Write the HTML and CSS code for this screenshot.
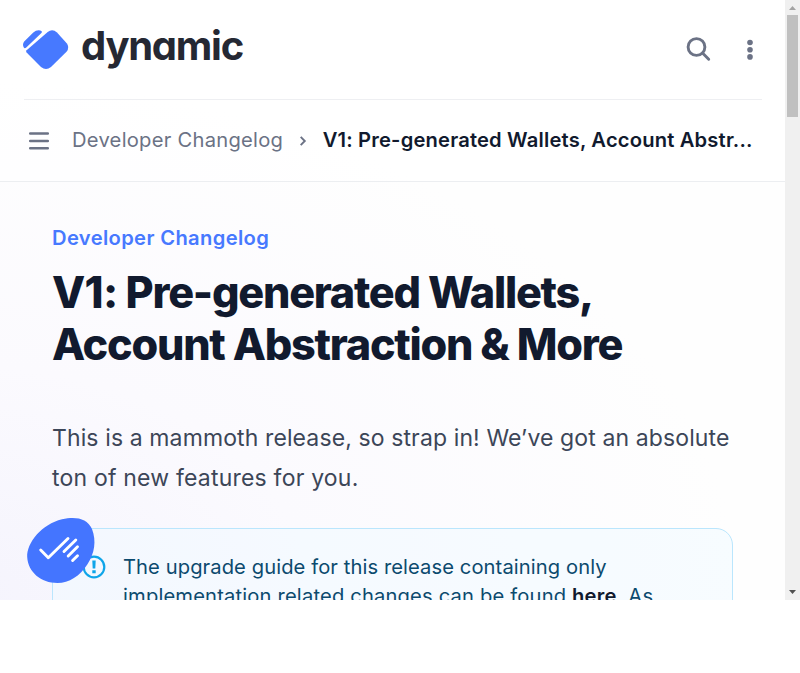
FILE: index.html
```html
<!DOCTYPE html>
<html lang="en">
<head>
<meta charset="utf-8">
<title>V1: Pre-generated Wallets, Account Abstraction &amp; More</title>
<link rel="stylesheet" href="styles.css">
</head>
<body>
<div class="window">
  <div class="page">
    <header class="header">
      <div class="topbar">
        <a class="logo">
          <svg width="46" height="40" viewBox="0 0 46 40" fill="#4779ff"><path d="M.8 17.600C-.3 15.800-.3 13.300 1.200 11.600L10.300 2.600Q13.500-.5 17.300.4L18.600 1.200Q19.500 2 18.400 3L3.300 17.400Q1.800 18.900.8 17.600Z"/><path d="M3.600 22.500Q2.500 21.300 3.600 20.300L24.700 2Q29.500-1.700 34 2.600L43.700 13.300Q47 17.400 43.500 21.700L28 36.900Q23 41.100 18 36.900Z"/></svg>
          <span class="wordmark">dynamic</span>
        </a>
        <div class="actions">
          <svg width="25" height="25" viewBox="0 0 25 25" fill="none" stroke="#6b7285" stroke-width="2.900" stroke-linecap="round"><circle cx="10.500" cy="10" r="8.400"/><path d="M16.500 16L22.700 22.200"/></svg>
          <svg width="6" height="20" viewBox="0 0 6 20" fill="#6b7285"><circle cx="3" cy="2.500" r="2.800"/><circle cx="3" cy="9.700" r="2.800"/><circle cx="3" cy="16.900" r="2.800"/></svg>
        </div>
      </div>
      <nav class="crumbs">
        <svg class="menu" width="20" height="18" viewBox="0 0 20 18" stroke="#6b7285" stroke-width="2.500" stroke-linecap="round"><path d="M1.200 1.500H18.800M1.200 9H18.800M1.200 16.300H18.800"/></svg>
        <span class="crumb">Developer Changelog</span>
        <svg class="chevron" width="6" height="10" viewBox="0 0 6 10" fill="none" stroke="#6b7285" stroke-width="1.900"><path d="M.7.8L4.800 5L.7 9.200"/></svg>
        <span class="current">V1: Pre-generated Wallets, Account Abstr...</span>
      </nav>
    </header>
    <main class="content">
      <p class="eyebrow">Developer Changelog</p>
      <h1 class="title"><span class="version">V1:</span> Pre-generated Wallets,<br>Account Abstraction &amp; More</h1>
      <p class="lead">This is a mammoth release, so strap in! We’ve got an absolute<br><span class="wide">ton of new features for you.</span></p>
      <aside class="callout">
        <svg class="info" width="24" height="24" viewBox="0 0 24 24"><circle cx="12" cy="12" r="10.300" fill="none" stroke="#0ea5e9" stroke-width="2.200"/><path fill="#0ea5e9" d="M10.300 5.500H13.700L13.300 13.500H10.700ZM10.300 15.300H13.700V18.300H10.300Z"/></svg>
        <p class="note">The upgrade guide for this release containing only<br><span class="wide">implementation related changes can be found <b>here</b>. As</span></p>
      </aside>
    </main>
    <svg class="consent" width="68" height="66" viewBox="0 0 68 66"><path fill="#4475ff" d="M.2 39C-.5 25 15 6 35 1.300C49-1.600 60 .3 65 11C69.500 23 67.800 35 60.300 46.500C53 58 42 65 30.500 65C14 65 1 54 .2 39Z"/><path fill="none" stroke="#fff" stroke-width="2.900" stroke-linecap="round" stroke-linejoin="round" d="M13.700 32L21.300 39.700L41 20.500M37 33.500L48.800 22M41.200 38L50.500 28.800M45.600 42.500L50.500 37.700"/></svg>
  </div>
  <div class="scrollbar">
    <svg width="7" height="4" viewBox="0 0 7 4"><path fill="#a3a3a3" d="M0 4L3.500 0L7 4Z"/></svg>
    <div class="thumb"></div>
    <svg class="down" width="7" height="4" viewBox="0 0 7 4"><path fill="#505050" d="M0 0H7L3.500 4Z"/></svg>
  </div>
</div>
</body>
</html>
```
FILE: styles.css
```css
* { box-sizing: border-box; }
body { margin: 0; background: #fff; font-family: Inter, "Liberation Sans", sans-serif; }
h1, p { margin: 0; white-space: nowrap; }
svg { display: block; flex: none; overflow: visible; }
.window { display: flex; height: 600px; overflow: hidden; }
.page {
  position: relative; width: 785px; height: 600px; overflow: hidden;
  background: radial-gradient(ellipse 780px 520px at -40px 600px, #f5f4fd 0%, #fbfafe 45%, #fefefe 100%);
}
.header { height: 182px; border-bottom: 1px solid #eceef1; background: rgba(255,255,255,.65); }
.topbar {
  display: flex; align-items: center; justify-content: space-between;
  height: 100px; margin: 0 23px 0 24px; border-bottom: 1px solid #eeeff2;
}
.logo { display: flex; align-items: center; gap: 12px; margin-left: -1px; }
.wordmark {
  margin-top: -7px; font-size: 40px; line-height: 48px; font-weight: 700; letter-spacing: -1.250px;
  color: #252833; font-feature-settings: "cv11", "ss03";
}
.actions { display: flex; align-items: center; gap: 36px; padding-right: 9px; }
.crumbs { display: flex; align-items: center; height: 81px; padding: 0 29px; font-size: 20.160px; line-height: 29px; white-space: nowrap; }
.crumb { margin: -2px 0 0 23px; color: #6b7285; letter-spacing: .26px; }
.chevron { margin: 0 16.500px 0 17px; }
.current { margin-top: -2px; font-weight: 600; letter-spacing: .18px; color: #111a2e; }
.content { padding: 41px 52px 0; }
.eyebrow { font-size: 20.160px; line-height: 29px; font-weight: 600; letter-spacing: .36px; color: #4779ff; }
.title { margin-top: 14px; font-size: 43.200px; line-height: 52px; font-weight: 800; letter-spacing: -1.260px; color: #111a2e; }
.version { letter-spacing: -.700px; }
.lead { margin-top: 48px; font-size: 23px; line-height: 40px; letter-spacing: .115px; color: #3c4658; }
.lead .wide { letter-spacing: .2px; }
.callout {
  display: flex; gap: 17px; width: 681px; height: 180px; margin-top: 30px; padding: 23px 29px;
  border: 1px solid #bae6fd; border-radius: 17px; background: rgba(240,249,255,.5);
}
.info { margin-top: 3px; }
.note { font-size: 20.160px; line-height: 29px; letter-spacing: .09px; color: #0c4a6e; }
.note .wide { letter-spacing: .17px; }
.note b { font-weight: 600; color: #111a2e; }
.consent { position: absolute; left: 27px; top: 518px; }
.scrollbar { display: flex; flex-direction: column; align-items: center; width: 15px; padding: 6px 0; background: #f0f0f0; }
.thumb { width: 11px; height: 102px; margin-top: 5px; background: #c0c0c0; }
.down { margin-top: auto; }
```
